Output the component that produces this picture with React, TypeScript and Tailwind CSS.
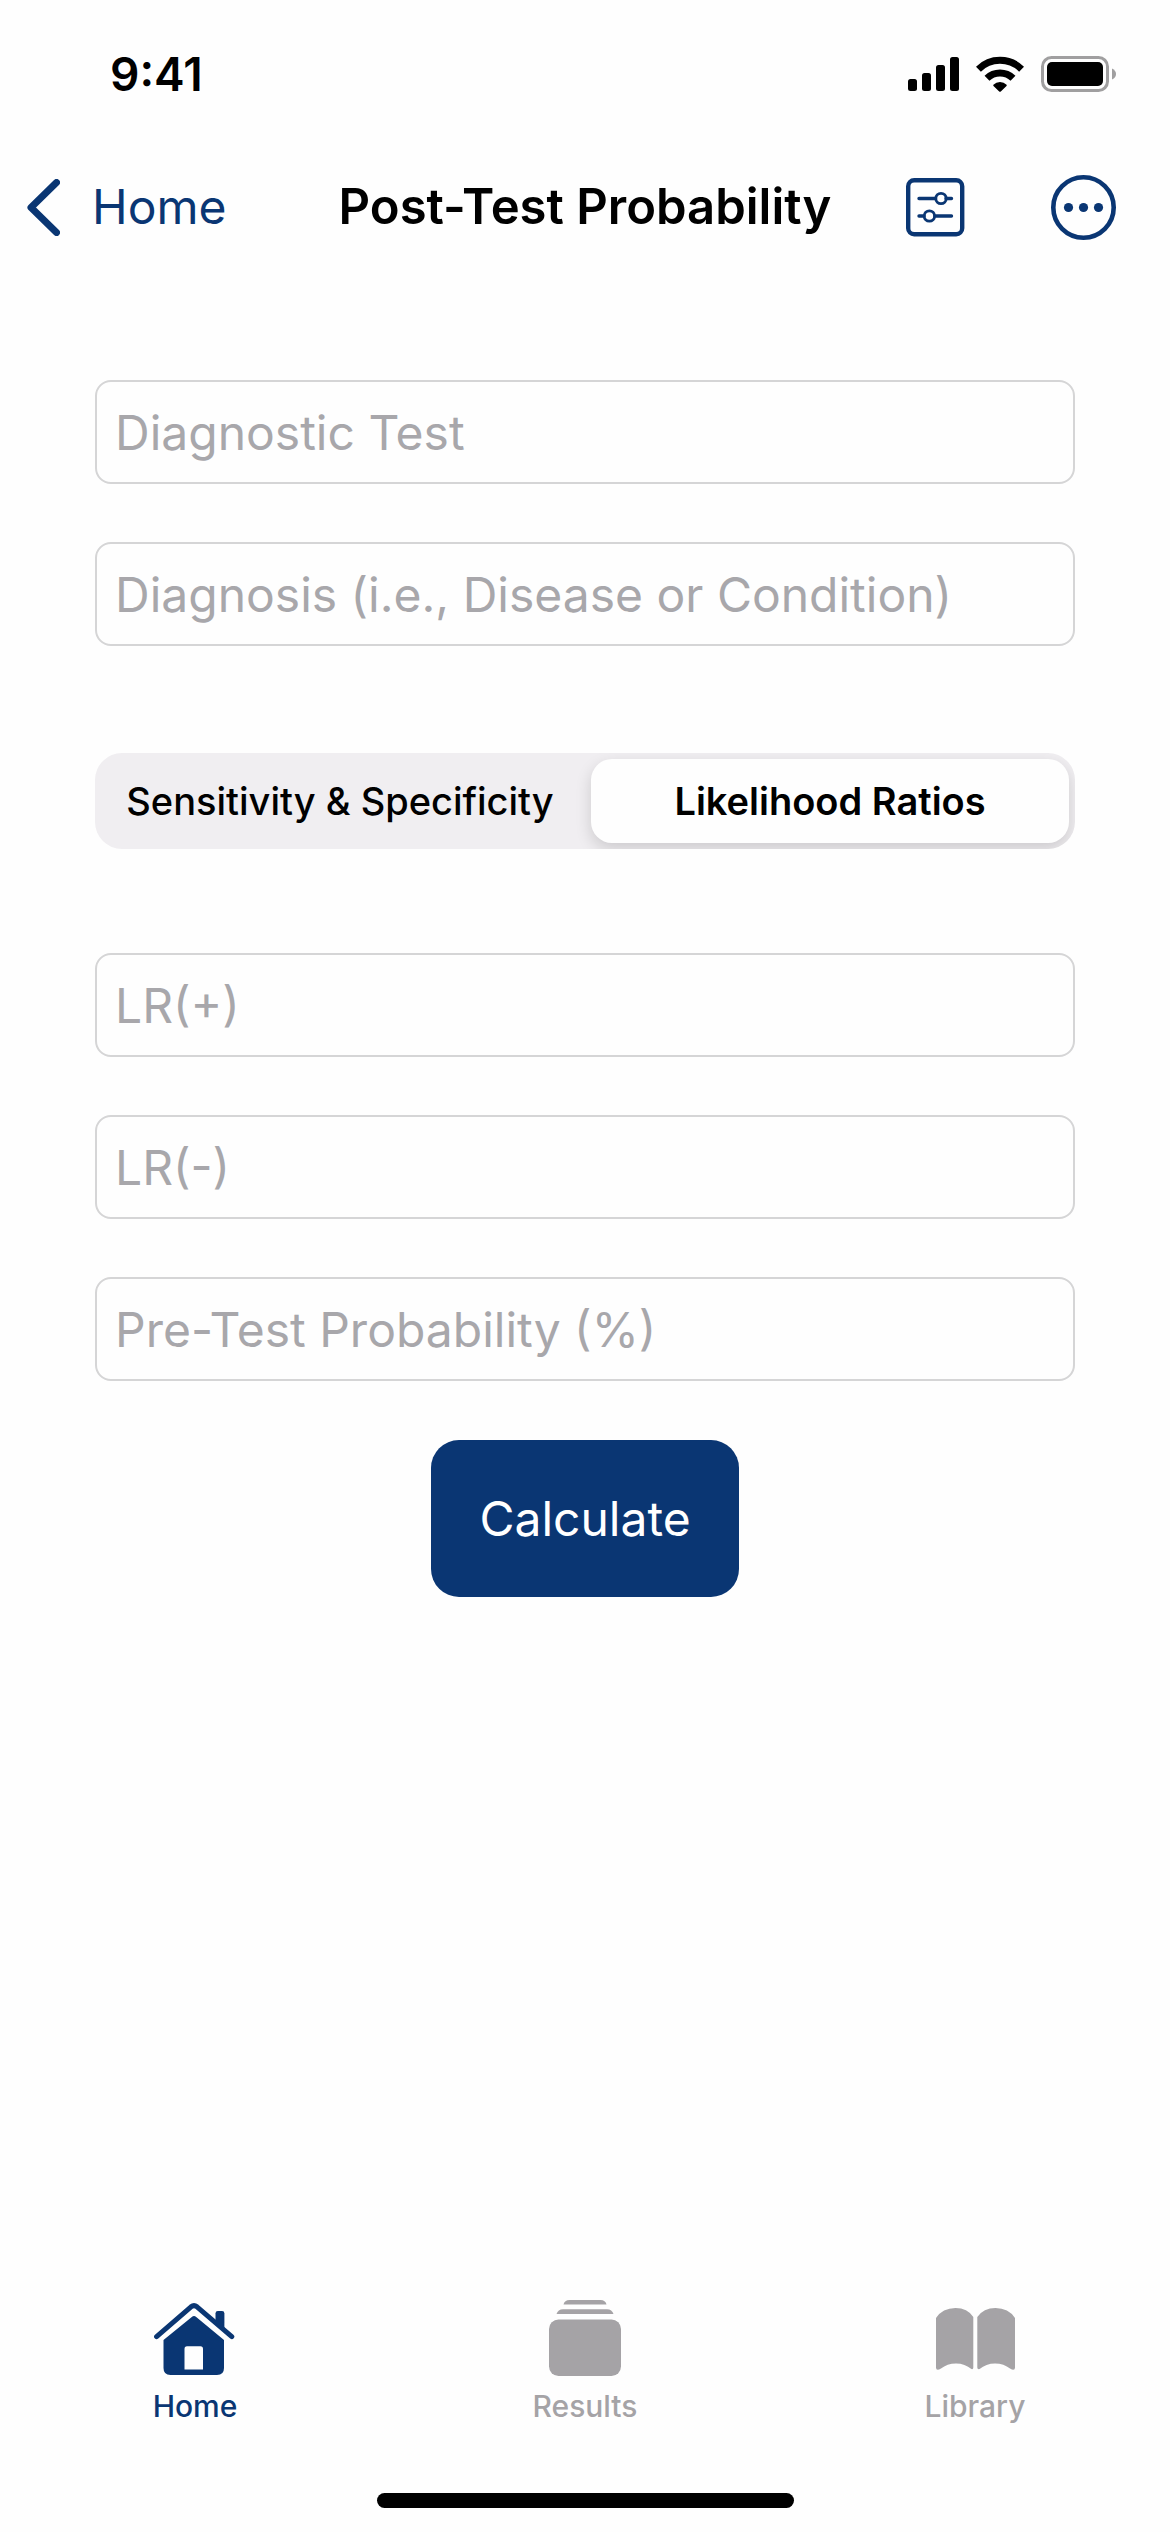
import { useState } from "react";

const TABS = [
  { id: "home", label: "Home", Icon: HouseIcon },
  { id: "results", label: "Results", Icon: StackIcon },
  { id: "library", label: "Library", Icon: BookIcon },
];

const MODES = ["Sensitivity & Specificity", "Likelihood Ratios"];

function SignalIcon() {
  return (
    <svg width="51" height="34" viewBox="0 0 51 34" fill="currentColor" aria-hidden="true">
      <rect x="0" y="22" width="9" height="12" rx="2.5" />
      <rect x="14" y="16" width="9" height="18" rx="2.5" />
      <rect x="28" y="8" width="9" height="26" rx="2.5" />
      <rect x="42" y="0" width="9" height="34" rx="2.5" />
    </svg>
  );
}

function WifiIcon() {
  return (
    <svg width="48" height="36" viewBox="0 0 48 36" aria-hidden="true">
      <g fill="none" stroke="currentColor" strokeWidth="7">
        <path d="M2.4 13.2 A30.5 30.5 0 0 1 45.6 13.2" />
        <path d="M11 22.3 A18.5 18.5 0 0 1 37 22.3" />
      </g>
      <path
        d="M17.4 28.8 A9.3 9.3 0 0 1 30.6 28.8 Q31 29.4 30.5 29.9 L24.8 35.4 Q24 36.2 23.2 35.4 L17.5 29.9 Q17 29.4 17.4 28.8 Z"
        fill="currentColor"
      />
    </svg>
  );
}

function BatteryIcon() {
  return (
    <svg width="75" height="36" viewBox="0 0 75 36" aria-hidden="true">
      <rect x="1.5" y="1.5" width="65" height="33" rx="9" fill="none" stroke="#a09fa0" strokeWidth="3" />
      <rect x="6" y="6" width="56" height="24" rx="5" fill="currentColor" />
      <path d="M71 12.5 Q75 14.5 75 18 Q75 21.5 71 23.5 Z" fill="#a09fa0" />
    </svg>
  );
}

function ChevronIcon() {
  return (
    <svg width="33" height="57" viewBox="0 0 33 57" fill="none" aria-hidden="true">
      <path
        d="M29.5 3.5 L4 28.5 L29.5 53.5"
        stroke="currentColor"
        strokeWidth="7"
        strokeLinecap="round"
        strokeLinejoin="round"
      />
    </svg>
  );
}

function SlidersIcon() {
  return (
    <svg width="59" height="59" viewBox="0 0 59 59" fill="none" stroke="currentColor" aria-hidden="true">
      <rect x="2.2" y="2.2" width="54" height="54" rx="6" strokeWidth="4.4" />
      <g strokeWidth="3.4" strokeLinecap="round">
        <path d="M13 20.5 H29.5 M40 20.5 H45.5" />
        <circle cx="35" cy="20.5" r="5.2" strokeWidth="2.8" />
        <path d="M13 38 H18 M29 38 H45.5" />
        <circle cx="23.4" cy="38" r="5.2" strokeWidth="2.8" />
      </g>
    </svg>
  );
}

function MoreIcon() {
  return (
    <svg width="65" height="65" viewBox="0 0 65 65" fill="currentColor" aria-hidden="true">
      <circle cx="32.5" cy="32.5" r="30.2" fill="none" stroke="currentColor" strokeWidth="4.6" />
      <circle cx="17.5" cy="32.5" r="4.6" />
      <circle cx="32.5" cy="32.5" r="4.6" />
      <circle cx="47.5" cy="32.5" r="4.6" />
    </svg>
  );
}

function HouseIcon() {
  return (
    <svg width="82" height="76" viewBox="0 0 82 76" fill="currentColor" aria-hidden="true">
      <path
        d="M2.6 36.6 L37 6.8 Q40 4.4 43 6.8 L77.8 36.6"
        fill="none"
        stroke="currentColor"
        strokeWidth="5"
        strokeLinecap="round"
        strokeLinejoin="round"
      />
      <path d="M61.5 23 V13.4 Q61.5 11 63.9 11 H68 Q70.4 11 70.4 13.4 V31 Z" />
      <path
        fillRule="evenodd"
        d="M37.8 17 Q40 15 42.2 17 L70 40 V68 Q70 75 63 75 H16.5 Q9.5 75 9.5 68 V40 Z M30.5 69.6 H49 V49 Q49 46.3 46.5 46.3 H33 Q30.5 46.3 30.5 49 Z"
      />
    </svg>
  );
}

function StackIcon() {
  return (
    <svg width="72" height="76" viewBox="0 0 72 76" fill="currentColor" aria-hidden="true">
      <path d="M14.5 4.5 Q15.5 0 20.5 0 H51.5 Q56.5 0 57.5 4.5 Z" />
      <path d="M7.5 14 Q9 9.3 14 9.3 H58 Q63 9.3 64.5 14 Z" />
      <rect x="0" y="19.5" width="72" height="56.5" rx="9.5" />
    </svg>
  );
}

function BookIcon() {
  return (
    <svg width="79" height="76" viewBox="0 0 79 76" fill="currentColor" aria-hidden="true">
      <path d="M0 18 Q6.5 8 19.5 8 Q31.5 8 37.3 17 V67.5 Q37.3 69.6 35.4 69 Q29 63.4 20 63.4 Q11 63.4 5 68.6 Q0 71.6 0 67.5 Z" />
      <path d="M79 18 Q72.5 8 59.5 8 Q47.5 8 41.3 17 V67.5 Q41.3 69.6 43.6 69 Q50 63.4 59 63.4 Q68 63.4 74 68.6 Q79 71.6 79 67.5 Z" />
    </svg>
  );
}

function Field({ label }: { label: string }) {
  return (
    <input
      type="text"
      aria-label={label}
      placeholder={label}
      className="h-[104px] w-full rounded-2xl border-2 border-[#d5d5d6] bg-transparent px-[18px] text-5xl text-black outline-none placeholder:text-[#a8a7ab]"
    />
  );
}

export default function App() {
  const [mode, setMode] = useState(MODES[1]);
  const [tab, setTab] = useState("home");

  return (
    <div className="flex min-h-screen flex-col bg-[#fefefe] font-[Inter,sans-serif] text-black">
      <div className="flex h-[148px] items-center justify-between pr-[54px] pl-[110px]">
        <span className="text-[46px] font-semibold">9:41</span>
        <div className="flex items-center gap-[17px]">
          <SignalIcon />
          <WifiIcon />
          <BatteryIcon />
        </div>
      </div>

      <header className="grid h-[118px] grid-cols-[1fr_auto_1fr] items-center px-[27px] text-[#0a3673]">
        <a href="#home" className="flex items-center gap-8 text-5xl">
          <ChevronIcon />
          Home
        </a>
        <h1 className="text-[49px] font-semibold text-black">Post-Test Probability</h1>
        <div className="flex items-center justify-end gap-[86px] pr-[27px]">
          <button type="button" aria-label="Settings">
            <SlidersIcon />
          </button>
          <button type="button" aria-label="More">
            <MoreIcon />
          </button>
        </div>
      </header>

      <main className="flex flex-1 flex-col px-[95px] pt-[114px]">
        <div className="flex flex-col gap-[58px]">
          <Field label="Diagnostic Test" />
          <Field label="Diagnosis (i.e., Disease or Condition)" />
        </div>

        <div className="mt-[107px] mb-[104px] grid h-24 grid-cols-2 gap-3 overflow-hidden rounded-[27px] bg-[#f0eef1] p-1.5">
          {MODES.map((m) => (
            <button
              key={m}
              type="button"
              aria-pressed={mode === m}
              onClick={() => setMode(m)}
              className={`rounded-[21px] text-[38px] whitespace-nowrap ${
                mode === m ? "bg-[#fefefe] font-semibold shadow-[0_6px_16px_rgba(0,0,0,0.15)]" : "font-medium"
              }`}
            >
              {m}
            </button>
          ))}
        </div>

        <div className="flex flex-col gap-[58px]">
          <Field label="LR(+)" />
          <Field label="LR(-)" />
          <Field label="Pre-Test Probability (%)" />
        </div>

        <button
          type="button"
          className="mt-[59px] h-[157px] self-center rounded-[28px] bg-[#0a3673] px-12 text-5xl text-white"
        >
          Calculate
        </button>
      </main>

      <nav className="grid grid-cols-3">
        {TABS.map(({ id, label, Icon }) => (
          <button
            key={id}
            type="button"
            onClick={() => setTab(id)}
            className={`flex flex-col items-center gap-2 text-[30px] font-medium ${
              tab === id ? "text-[#0a3673]" : "text-[#a5a3a6]"
            }`}
          >
            <Icon />
            {label}
          </button>
        ))}
      </nav>
      <div className="mt-16 mb-6 h-[15px] w-[417px] self-center rounded-full bg-black" />
    </div>
  );
}
